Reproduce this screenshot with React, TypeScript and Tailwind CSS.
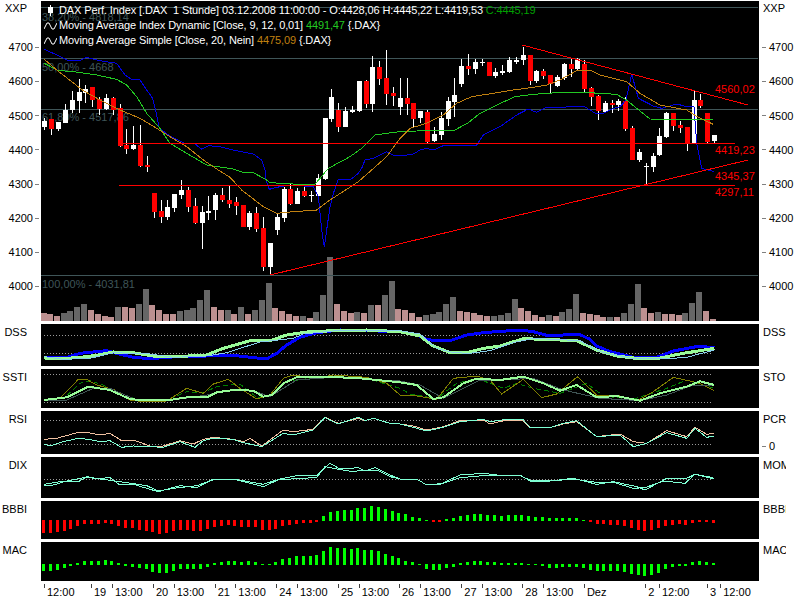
type Pts = number[]

// candles: high, body top, body bottom, low, red? (y in 3x zoom px)
const candles: number[][] = [
  [355,362,380,390,0],[358,358,386,405,1],[365,365,387,392,0],[313,330,368,370,0],[272,300,330,340,0],[238,276,302,340,0],[255,266,278,310,0],[260,262,300,322,1],
  [290,298,328,345,1],[283,294,328,330,0],[290,294,330,345,1],[312,324,438,440,1],[388,435,447,462,1],[378,435,447,450,0],[375,435,498,500,1],[468,496,500,515,1],
  [580,580,635,653,1],[600,634,651,668,1],[600,622,651,660,0],[582,582,623,635,0],[540,570,585,597,0],[560,570,620,635,1],[595,618,670,672,1],[618,636,668,746,0],
  [588,633,638,660,0],[580,585,630,660,0],[565,585,600,605,1],[558,600,611,623,1],[592,606,617,645,1],[615,615,681,681,1],[632,638,681,690,0],[622,638,686,695,1],
  [650,684,801,812,1],[729,729,800,826,0],[638,651,690,705,0],[560,567,654,665,0],[553,568,611,615,1],[565,573,611,613,0],[562,573,587,590,1],[572,584,588,605,0],
  [522,535,588,605,0],[354,354,537,540,0],[268,292,358,365,0],[310,330,380,395,1],[320,333,380,382,0],[318,330,335,340,0],[243,243,333,335,0],[240,243,312,325,1],
  [168,201,312,335,0],[183,201,237,255,1],[150,235,282,315,1],[262,280,288,318,1],[235,295,320,345,0],[235,295,312,345,1],[310,310,357,380,1],[333,333,355,370,0],
  [330,335,425,428,1],[380,403,423,425,0],[335,355,404,420,0],[290,303,357,378,0],[235,286,305,350,0],[176,198,252,260,0],[162,198,208,225,1],[178,186,207,222,0],
  [178,186,190,198,0],[185,186,227,228,1],[205,217,228,233,0],[195,213,218,225,0],[172,181,215,218,0],[172,181,185,193,0],[140,165,180,195,0],[165,165,242,255,1],
  [210,213,243,250,0],[208,213,228,238,1],[226,226,251,278,1],[225,232,258,262,0],[190,192,235,240,0],[178,192,207,230,1],[175,178,207,210,0],[180,192,268,276,1],
  [260,265,290,318,1],[285,288,333,360,1],[302,310,337,340,0],[300,310,316,340,1],[298,303,316,332,0],[290,303,387,392,1],[378,385,480,480,1],[448,457,481,485,0],
  [490,497,502,552,0],[460,468,500,515,0],[385,408,465,468,0],[337,340,412,415,0],[338,340,378,392,1],[362,375,385,400,1],[381,381,430,452,1],[273,300,430,433,0],
  [282,300,318,325,1],[340,340,425,428,1],[405,405,423,430,0],
]

// volume tops in the same zoomed rows (add 510), negative = pink bar
const volumes = [
  -429,-432,-438,429,423,411,402,-420,-432,-437,-441,411,-411,-414,402,357,-405,-420,-432,-432,423,420,414,390,360,-411,-420,420,-432,411,-432,420,390,339,-414,-423,
  -432,-438,438,-444,426,375,261,-402,-423,-429,426,-429,405,-405,375,333,-418,-420,-429,-441,435,432,426,402,381,-423,-426,-429,-435,-438,438,435,429,387,-414,-423,
  -435,-441,435,-438,426,417,372,-429,-432,-435,-441,441,-441,429,402,342,-414,-429,426,-432,-432,-435,429,399,366,-423,-447,
]

const bbbi = [
  233,234,231,228,222,213,207,207,207,203,207,213,219,219,225,228,231,237,234,228,225,225,228,228,222,216,213,210,213,216,216,216,225,225,222,213,210,207,204,204,201,
  183,171,168,165,165,159,159,153,156,162,168,174,177,186,188,195,201,201,191,189,183,180,177,177,180,180,183,180,180,180,183,186,186,189,189,189,189,189,195,
  201,207,207,210,210,213,219,225,228,225,219,213,210,207,210,204,201,201,204,
]

const mac = [
  348,348,345,339,333,324,318,318,318,315,318,324,333,336,339,342,351,354,354,348,342,342,342,342,336,324,321,318,318,321,318,321,327,327,321,312,309,303,303,303,300,
  288,276,279,279,282,279,285,285,288,297,303,309,318,321,327,342,345,345,339,336,324,321,318,318,321,321,324,324,324,324,327,327,333,339,339,336,336,336,339,
  345,348,348,348,348,351,357,360,363,360,354,342,336,333,333,321,318,321,324,
]

const withRight = (a: Pts, b: Pts) => [...a, ...b.map((v, i) => (i % 2 === 0 ? v + 1200 : v))]

const maBlue = withRight(
  [133,148,160,160,200,180,240,182,258,172,300,182,350,190,375,225,395,238,420,240,440,270,458,295,470,345,478,385,510,408,555,430,585,432,605,447,625,437,660,440,700,450,760,462,785,480,795,510,798,540,808,568,830,562,870,555,940,560,955,590,965,690,973,742,980,690,990,620,1000,580,1015,538,1050,540,1075,520,1085,505,1095,480,1120,475,1160,455,1180,465],
  [0,468,40,462,60,450,80,445,100,450,130,437,180,437,230,435,250,405,300,380,350,345,385,327,410,337,440,322,480,322,550,318,570,330,590,342,610,340,640,325,660,320,678,300,695,222,715,295,760,318,785,325,830,312,860,320,882,320,890,430,905,505,925,510,942,515],
)
const maGreen = withRight(
  [133,190,175,212,215,214,290,225,350,238,380,255,410,290,440,340,480,385,510,430,560,460,620,495,700,507,730,517,760,518,800,540,810,548,880,552,945,552,960,535,985,505,1050,470,1085,445,1125,405,1175,398],
  [0,395,50,393,165,390,205,368,240,340,290,315,345,290,400,283,470,278,550,277,650,283,680,300,710,325,750,357,800,358,870,360,940,358],
)
const maOrange = withRight(
  [133,178,170,210,250,272,300,300,360,330,420,355,470,385,510,410,560,440,610,480,655,510,690,532,725,570,790,620,830,640,880,635,950,630,990,600,1040,568,1075,545,1115,510,1160,470],
  [0,415,30,385,80,370,130,345,170,310,215,290,280,280,340,270,400,262,440,255,480,240,530,212,575,212,600,225,680,245,720,280,780,315,860,330,895,352,940,373],
)

const dss = [
  { c: '#0000ff', w: 3, p: withRight([133,112,200,112,240,100,320,92,350,100,400,112,450,116,530,110,620,108,700,106,770,114,805,114,830,100,860,75,900,52,950,38,1020,30,1100,32], [0,35,50,45,80,58,110,63,150,62,200,45,250,38,360,30,400,35,440,46,540,44,570,58,590,78,630,95,700,112,770,112,820,93,900,78,943,84]) },
  { c: '#98fb98', w: 3, p: withRight([133,114,190,116,240,112,290,106,340,96,400,98,470,110,530,110,620,105,670,85,750,62,810,62,860,45,920,36,1000,32,1100,30], [0,35,60,48,100,78,150,98,200,98,250,85,300,78,370,56,430,58,530,62,590,90,650,108,700,114,780,114,850,100,943,85]) },
  { c: '#87ceeb', w: 1, p: withRight([133,110,190,118,270,115,340,98,450,102,520,112,620,108,680,98,780,66,880,55,910,42,1000,33], [0,32,60,42,110,85,160,98,210,100,270,92,340,68,400,55,540,62,600,95,700,116,800,116,860,112,943,90]) },
]
const sto = [
  { c: '#808000', w: 1, p: withRight([133,240,180,235,235,178,260,178,290,195,340,208,390,240,430,245,500,243,560,205,610,220,640,192,685,178,720,205,770,237,810,225,850,175,880,165,950,175,1000,165,1100,172,1160,190], [0,225,50,228,110,238,160,175,230,168,270,180,305,222,370,178,425,233,470,222,532,170,590,225,650,225,710,243,760,215,820,172,900,190,943,212]) },
  { c: '#405555', w: 1, p: withRight([133,240,200,240,280,205,330,205,410,240,520,240,620,225,680,212,760,212,810,230,890,180,1000,172], [0,183,60,195,130,235,200,200,240,180,300,180,400,175,490,210,600,235,720,242,800,225,880,195,943,195]) },
  { c: '#98fb98', w: 2, p: withRight([133,240,200,232,265,200,330,210,385,235,420,241,510,240,560,232,620,232,650,217,700,210,760,212,790,230,815,225,850,190,890,172,980,170,1080,175], [0,187,50,195,100,237,130,232,190,190,230,176,300,180,370,170,430,190,480,212,530,195,590,232,650,228,720,242,780,220,860,200,900,184,943,195]) },
]
const stoDash = withRight([133,240,190,236,240,190,270,182,310,195,360,220,410,238,500,241,560,215,610,218,650,200,720,192,770,232,810,228,860,185,950,172,1100,175], [0,205,30,222,110,236,170,190,230,175,310,205,350,190,400,205,480,220,560,190,610,228,700,238,800,205,860,180,943,205])
const rsiPeach = withRight([133,358,170,355,235,337,265,338,300,345,330,340,365,362,400,360,450,378,490,378,540,362,580,372,610,358,640,352,700,358,730,365,750,355,785,378,850,330,880,335,940,328,975,292,1015,310,1075,295,1095,302,1120,295,1170,310], [0,312,40,318,80,330,130,320,180,302,250,300,270,312,320,300,370,302,390,322,450,323,490,312,530,305,590,350,660,342,700,365,740,370,800,332,860,350,885,322,920,343,943,340])
const rsiAqua = withRight([133,372,150,378,190,365,235,355,265,358,300,365,330,362,365,382,400,378,450,380,490,382,540,365,585,382,610,362,640,355,700,358,730,368,785,380,850,340,880,345,940,330,975,292,1015,312,1075,292,1095,302,1120,295,1170,310], [0,312,40,322,80,333,130,322,180,305,250,298,270,305,320,298,370,300,390,322,450,323,490,310,530,302,590,350,660,345,700,380,740,370,800,338,860,355,885,325,920,352,943,348])
const dixA = withRight([133,93,160,90,200,78,250,68,300,70,330,68,360,90,400,88,440,100,475,110,540,92,590,98,640,72,700,72,740,82,790,95,840,72,900,60,950,62,990,25,1020,42,1075,38,1095,48,1125,38,1170,60], [0,72,50,72,80,90,120,88,180,60,250,55,290,60,360,60,390,78,450,78,520,70,590,88,640,80,710,95,735,105,800,70,860,70,885,58,940,68])
const dixB = withRight([133,88,180,80,235,80,260,65,300,72,360,80,440,92,475,108,520,100,590,92,640,75,700,72,745,80,790,88,830,75,900,70,950,68,975,35,1010,42,1060,50,1090,45,1130,45,1170,65], [0,72,50,72,80,90,130,85,180,68,250,62,320,62,360,62,390,75,450,78,520,72,590,82,640,82,700,100,735,98,790,78,855,85,885,58,943,72])

const ticks: [number, string][] = [
  [133,'12:00'],[274,'19'],[337,'13:00'],[460,'20'],[522,'13:00'],[645,'21'],[707,'13:00'],[830,'24'],[892,'13:00'],[1015,'25'],[1077,'13:00'],[1198,'26'],
  [1262,'13:00'],[1385,'27'],[1446,'13:00'],[1568,'28'],[1630,'13:00'],[1753,'Dez'],[1937,'2'],[1978,'12:00'],[2122,'3'],[2162,'12:00'],
]

const cx = (i: number) => Math.round((133 + 20.5 * i) / 3)
const bx = (i: number) => Math.round((129 + 20.5 * i) / 3)

function Line({ p, off = 0, c, w = 1, dash }: { p: Pts; off?: number; c: string; w?: number; dash?: string }) {
  const pts: string[] = []
  for (let i = 0; i < p.length; i += 2) pts.push(`${p[i] / 3},${p[i + 1] / 3 + off}`)
  return <polyline points={pts.join(' ')} fill="none" stroke={c} strokeWidth={w} strokeDasharray={dash} />
}

function Dots({ y }: { y: number }) {
  return <line x1={44} x2={713} y1={y} y2={y} stroke="#9a9a9a" strokeWidth={1} strokeDasharray="1 2" />
}

function Panel({ top, h, children }: { top: number; h: number; children: React.ReactNode }) {
  return (
    <svg viewBox={`41 ${top} 718 ${h}`} width={718} height={h} shapeRendering="crispEdges" className="block bg-black">
      {children}
    </svg>
  )
}

function Candle({ i, d }: { i: number; d: number[] }) {
  const x = cx(i)
  const [hi, top, bot, lo] = d.map((v) => Math.round(v / 3))
  return (
    <g>
      <rect x={x} y={hi} width={1} height={Math.max(lo - hi, 1)} fill="#fff" />
      <rect x={x - 2} y={top} width={5} height={Math.max(bot - top, 1)} fill={d[4] ? '#ff0000' : '#fff'} />
    </g>
  )
}

// the originals clip these labels at the column edge (SSTI, MOM, BBBI)
function SideLabel({ children, right }: { children: React.ReactNode; right?: boolean }) {
  return right ? (
    <div className="h-[15px] w-[27px] overflow-hidden whitespace-nowrap pl-[4px] leading-[15px]">{children}</div>
  ) : (
    <div className="ml-[2px] h-[15px] w-[25px] overflow-hidden whitespace-nowrap text-right leading-[15px]">{children}</div>
  )
}

function Row({ h, left, right, top, children }: { h: number; left: string; right: string; top: number; children: React.ReactNode }) {
  return (
    <div className="flex">
      <div className="w-[41px] pt-[1px]">
        <SideLabel>{left}</SideLabel>
      </div>
      <Panel top={top} h={h}>
        {children}
      </Panel>
      <div className="w-[41px] pt-[1px]">
        <SideLabel right>{right}</SideLabel>
      </div>
    </div>
  )
}

function Squiggle() {
  return (
    <svg width={13} height={8} viewBox="0 0 13 8" className="mr-[2px]">
      <path d="M0 7 L3 1 L5 1 L8 7 L10 7 L13 1" fill="none" stroke="#fff" strokeWidth={1} />
    </svg>
  )
}

function Legend() {
  return (
    <div className="absolute left-[3px] top-[2px] text-[11px] leading-[15px] tracking-[-0.12px] text-white">
      <div className="flex h-[15px] items-center whitespace-pre">
        <svg width={13} height={11} viewBox="0 0 13 11" className="mr-[2px]">
          <rect x={6} y={0} width={1} height={11} fill="#fff" />
          <rect x={4} y={2} width={5} height={6} fill="#fff" />
        </svg>
        <span>DAX Perf. Index [.DAX  1 Stunde] 03.12.2008 11:00:00 - O:4428,06 H:4445,22 L:4419,53 </span>
        <span className="text-[#00a000]">C:4445,19</span>
      </div>
      <div className="flex h-[15px] items-center whitespace-pre">
        <Squiggle />
        <span>Moving Average Index Dynamic [Close, 9, 12, 0,01] </span>
        <span className="text-[#22c822]">4491,47</span>
        <span> {'{.DAX}'}</span>
      </div>
      <div className="flex h-[15px] items-center whitespace-pre">
        <Squiggle />
        <span>Moving Average Simple [Close, 20, Nein] </span>
        <span className="text-[#c08010]">4475,09</span>
        <span> {'{.DAX}'}</span>
      </div>
    </div>
  )
}

function MainChart() {
  return (
    <div className="relative">
      <Panel top={1} h={320}>
        {volumes.map((v, i) => {
          const t = Math.round((Math.abs(v) + 510) / 3)
          return <rect key={i} x={Math.max(bx(i) - 3, 41)} y={t} width={6} height={321 - t} fill={v < 0 ? '#bc9090' : '#666666'} />
        })}
        {[22, 175, 328, 826].map((y) => (
          <line key={y} x1={41} x2={758} y1={Math.round(y / 3)} y2={Math.round(y / 3)} stroke="#3f5558" strokeWidth={1} />
        ))}
        <g fontSize={11} fill="#3f5558">
          <text x={42} y={21}>38,20% - 4818,14</text>
          <text x={42} y={71}>50,00% - 4668</text>
          <text x={42} y={121}>61,80% - 4517,86</text>
          <text x={42} y={288}>100,00% - 4031,81</text>
        </g>
        {candles.map((d, i) => (
          <Candle key={i} i={i} d={d} />
        ))}
        <Line p={maBlue} c="#0000e0" />
        <Line p={maGreen} c="#22c822" />
        <Line p={maOrange} c="#c08010" />
        <line x1={120} x2={735} y1={143} y2={143} stroke="#ff0000" />
        <line x1={119} x2={735} y1={185} y2={185} stroke="#ff0000" />
        <line x1={522} y1={45} x2={748} y2={105} stroke="#ff0000" />
        <line x1={270} y1={275} x2={748} y2={160} stroke="#ff0000" />
        <g fontSize={11} fill="#ff0000">
          <text x={715} y={93}>4560,02</text>
          <text x={715} y={154}>4419,23</text>
          <text x={715} y={180}>4345,37</text>
          <text x={715} y={196}>4297,11</text>
        </g>
      </Panel>
      <Legend />
    </div>
  )
}

function MainSide({ right }: { right?: boolean }) {
  const levels = ['4700', '4600', '4500', '4400', '4300', '4200', '4100', '4000']
  return (
    <div className="w-[41px]">
      <div className="h-[29.6px]">
        <SideLabel right={right}>XXP</SideLabel>
      </div>
      {levels.map((l) => (
        <div key={l} className={right ? 'flex h-[34.1px] items-center gap-[3px] pl-[3px]' : 'flex h-[34.1px] items-center justify-end gap-[2px] pr-[2px]'}>
          {right ? <div className="h-[1px] w-[4px] bg-[#808080]" /> : null}
          <span>{l}</span>
          {right ? null : <div className="h-[1px] w-[4px] bg-[#808080]" />}
        </div>
      ))}
    </div>
  )
}

function TimeAxis() {
  return (
    <div className="flex pl-[44px]">
      {ticks.map(([x, label], i) => {
        const next = i < ticks.length - 1 ? ticks[i + 1][0] : x + 120
        return (
          <div key={x} className="flex" style={{ width: (next - x) / 3 }}>
            <div className="mt-[3px] h-[4px] w-[1px] bg-[#404040]" />
            <span className="ml-[2px] mt-[5px] leading-[13px]">{label}</span>
          </div>
        )
      })}
    </div>
  )
}

export default function App() {
  return (
    <div className="h-[600px] w-[800px] overflow-hidden bg-white pt-[1px] font-['Liberation_Sans',sans-serif] text-[11px] text-black">
      <div className="flex">
        <MainSide />
        <MainChart />
        <MainSide right />
      </div>
      <div className="mt-[3px] flex flex-col gap-[3px]">
        <Row h={42} top={324} left="DSS" right="DSS">
          <Dots y={335.5} />
          <Dots y={353.5} />
          {dss.map((l) => (
            <Line key={l.c} p={l.p} off={320} c={l.c} w={l.w} />
          ))}
        </Row>
        <Row h={39} top={369} left="SSTI" right="STO">
          <Dots y={374.5} />
          <Dots y={402.5} />
          <Line p={stoDash} off={320} c="#008000" dash="5 3" />
          {sto.map((l) => (
            <Line key={l.c} p={l.p} off={320} c={l.c} w={l.w} />
          ))}
        </Row>
        <div className="flex">
          <div className="w-[41px] pt-[1px]">
            <SideLabel>RSI</SideLabel>
          </div>
          <Panel top={411} h={43}>
            <Dots y={420.5} />
            <Dots y={444.5} />
            <Line p={rsiPeach} off={320} c="#f0c0a0" />
            <Line p={rsiAqua} off={320} c="#7fffd4" />
          </Panel>
          <div className="w-[41px] pt-[1px]">
            <SideLabel right>PCR</SideLabel>
            <div className="mt-[13px] flex h-[13px] items-center gap-[3px] pl-[3px]">
              <div className="h-[1px] w-[4px] bg-[#808080]" />
              <span>0</span>
            </div>
          </div>
        </div>
        <Row h={41} top={457} left="DIX" right="MOM">
          <Dots y={479.5} />
          <Line p={dixA} off={455} c="#7fffd4" />
          <Line p={dixB} off={455} c="#7fffd4" />
        </Row>
        <Row h={38} top={501} left="BBBI" right="BBBI">
          {bbbi.map((v, i) => {
            const red = v > 198
            const t = Math.round((red ? 195 : v) / 3 + 455)
            const b = Math.round((red ? v : 198) / 3 + 455)
            return <rect key={i} x={bx(i) - 1} y={t} width={3} height={b - t} fill={red ? '#ff0000' : '#00ff00'} />
          })}
        </Row>
        <Row h={39} top={542} left="MAC" right="MAC">
          {mac.map((v, i) => {
            const t = Math.round((v > 330 ? 327 : v) / 3 + 455)
            const b = Math.round((v > 330 ? v : 330) / 3 + 455)
            return <rect key={i} x={bx(i) - 1} y={t} width={3} height={b - t} fill="#00ff00" />
          })}
        </Row>
      </div>
      <TimeAxis />
    </div>
  )
}
